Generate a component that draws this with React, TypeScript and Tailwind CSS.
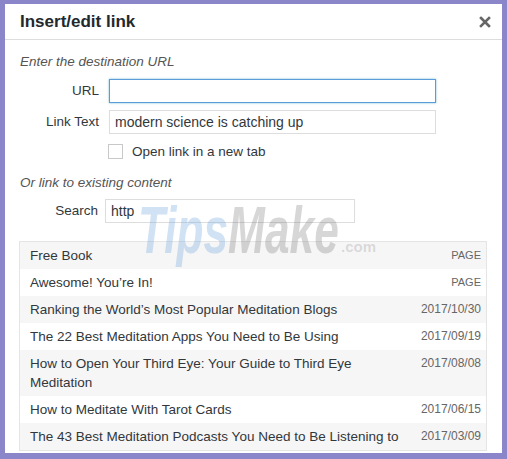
import React from 'react';

const results = [
  { title: 'Free Book', info: 'PAGE' },
  { title: 'Awesome! You’re In!', info: 'PAGE' },
  { title: 'Ranking the World’s Most Popular Meditation Blogs', info: '2017/10/30' },
  { title: 'The 22 Best Meditation Apps You Need to Be Using', info: '2017/09/19' },
  { title: 'How to Open Your Third Eye: Your Guide to Third Eye Meditation', info: '2017/08/08' },
  { title: 'How to Meditate With Tarot Cards', info: '2017/06/15' },
  { title: 'The 43 Best Meditation Podcasts You Need to Be Listening to', info: '2017/03/09' },
];

export default function App() {
  return (
    <div className="relative w-[507px] h-[459px] bg-[#8b86c9] pt-[4px] px-[5px] pb-[6px] font-['Liberation_Sans',Arial,sans-serif] text-[#32373c]">
      <div className="w-full h-full bg-white flex flex-col">
        {/* header */}
        <div className="h-[36px] border-b border-[#dddddd] flex items-center justify-between pl-[15px] pr-[11px] shrink-0">
          <h1 className="text-[17px] font-bold text-[#23282d] leading-none">Insert/edit link</h1>
          <svg width="12" height="12" viewBox="0 0 12 12" className="mt-[1px]">
            <path d="M2 2 L10 10 M10 2 L2 10" stroke="#666" strokeWidth="2.6" strokeLinecap="square" />
          </svg>
        </div>

        <div className="pl-[15px] pr-[15px] flex flex-col">
          <p className="mt-[14px] text-[13.5px] leading-[16px] italic text-[#555]">Enter the destination URL</p>

          <div className="mt-[9px] flex items-center">
            <label className="w-[79px] text-right text-[13.5px] text-[#32373c]">URL</label>
            <input
              className="ml-[10px] w-[327px] h-[24px] border border-[#5b9dd9] shadow-[0_0_2px_rgba(30,140,190,0.6)] bg-white outline-none px-[5px] text-[14px]"
              defaultValue=""
            />
          </div>

          <div className="mt-[7px] flex items-center">
            <label className="w-[79px] text-right text-[13.5px] text-[#32373c]">Link Text</label>
            <input
              className="ml-[10px] w-[327px] h-[24px] border border-[#dddddd] bg-white outline-none px-[5px] text-[14px] text-[#32373c]"
              defaultValue="modern science is catching up"
            />
          </div>

          <div className="mt-[10px] flex items-center ml-[88px]">
            <span className="w-[15px] h-[15px] border border-[#c8c8c8] bg-white inline-block" />
            <span className="ml-[9px] text-[13.5px] leading-[15px] text-[#32373c]">Open link in a new tab</span>
          </div>

          <p className="mt-[16px] text-[13.5px] leading-[16px] italic text-[#555]">Or link to existing content</p>

          <div className="mt-[8px] flex items-center">
            <label className="w-[78px] text-right text-[13.5px] text-[#32373c]">Search</label>
            <input
              className="ml-[7px] w-[250px] h-[24px] border border-[#dddddd] bg-white outline-none px-[5px] text-[14px] text-[#32373c]"
              defaultValue="http"
            />
          </div>
        </div>

        {/* results list */}
        <ul className="mt-[18px] ml-[14px] mr-[15px] border border-[#e5e5e5]">
          {results.map((r, i) => (
            <li
              key={i}
              className={`flex justify-between items-start pl-[10px] pr-[5px] py-[4px] text-[13.5px] leading-[19px] ${i % 2 === 0 ? 'bg-[#f6f6f6]' : 'bg-white'}`}
            >
              <span className="w-[380px] text-[#32373c]">{r.title}</span>
              <span className={`text-[#666] ${r.info === 'PAGE' ? 'text-[11px]' : 'text-[12px]'}`}>{r.info}</span>
            </li>
          ))}
        </ul>
      </div>

      {/* watermark */}
      <div className="absolute left-[138px] top-[197px] w-[200px] pointer-events-none select-none">
        <span className="inline-block origin-left scale-x-[0.67] text-[66px] leading-none font-bold italic whitespace-nowrap">
          <span className="text-[rgba(110,165,220,0.32)]">Tips</span>
          <span className="text-[rgba(110,110,110,0.28)]">Make</span>
        </span>
      </div>
      <span className="absolute left-[341px] top-[239px] text-[15px] leading-none font-bold text-[rgba(110,110,110,0.22)] pointer-events-none">.com</span>
    </div>
  );
}
